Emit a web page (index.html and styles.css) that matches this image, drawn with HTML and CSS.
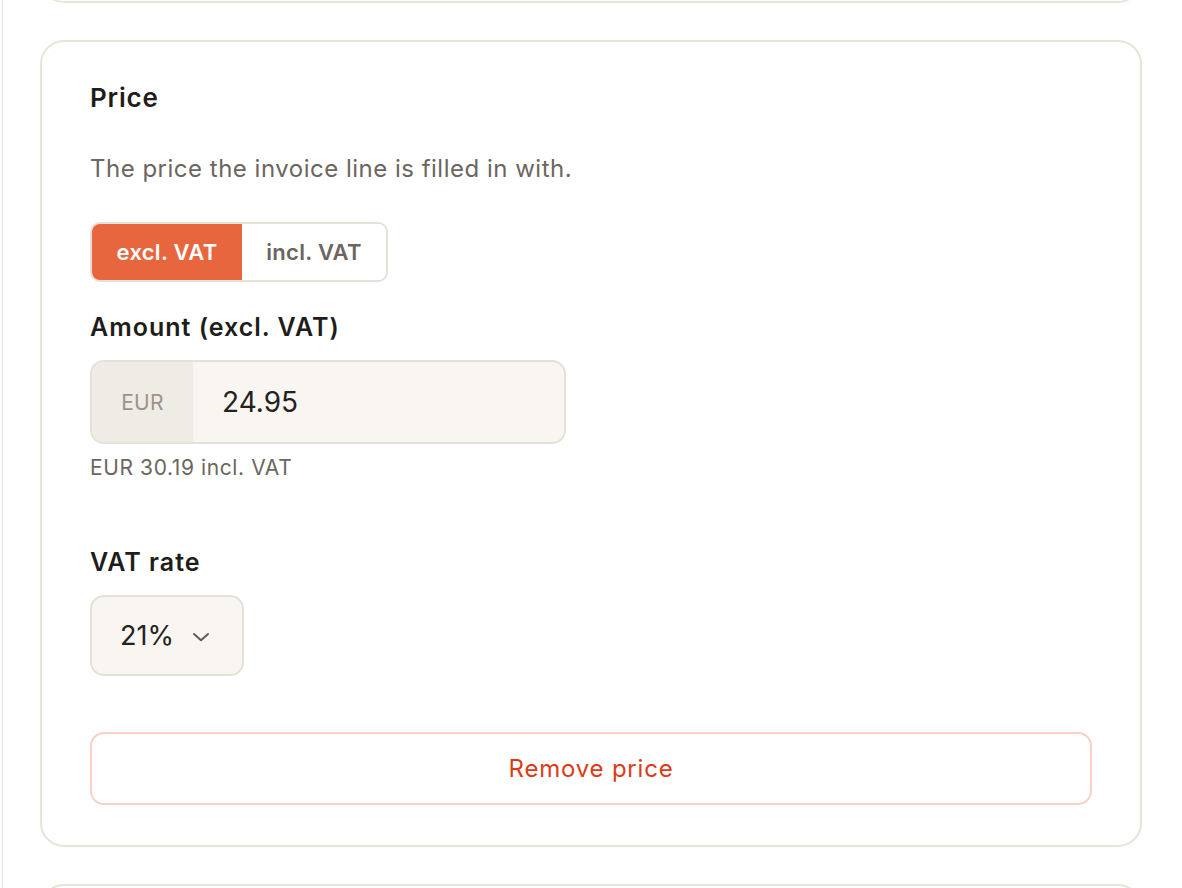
FILE: index.html
```html
<!DOCTYPE html>
<html>
<head>
<meta charset="utf-8">
<link rel="stylesheet" href="styles.css">
</head>
<body>
<div class="page">
  <div class="card card-prev"></div>
  <div class="card">
    <h2 class="title">Price</h2>
    <p class="desc">The price the invoice line is filled in with.</p>
    <div class="toggle">
      <button class="seg seg-active">excl. VAT</button>
      <button class="seg">incl. VAT</button>
    </div>
    <label class="label label-amount">Amount (excl. VAT)</label>
    <div class="money">
      <span class="prefix">EUR</span>
      <span class="value">24.95</span>
    </div>
    <p class="hint">EUR 30.19 incl. VAT</p>
    <label class="label label-vat">VAT rate</label>
    <div class="select">
      <span class="select-value">21%</span>
      <svg class="chev" width="18" height="10" viewBox="0 0 18 10"><path d="M2 2 9 8.2 16 2" fill="none" stroke="#5f5a54" stroke-width="2" stroke-linecap="round" stroke-linejoin="round"/></svg>
    </div>
    <button class="remove">Remove price</button>
  </div>
  <div class="card card-next"></div>
</div>
</body>
</html>
```
FILE: styles.css
```css
html, body {
  margin: 0;
  padding: 0;
  background: #ffffff;
  height: 888px;
  overflow: hidden;
}
body {
  font-family: Inter, "Noto Sans", sans-serif;
  color: #1f1d1a;
  padding-left: 2px;
}
.page {
  border-left: 1px solid #e6e2d8;
  padding-left: 37px;
  width: 1102px;
  display: flex;
  flex-direction: column;
  gap: 37px;
  min-height: 1200px;
}
.card {
  border: 2px solid #e8e4da;
  border-radius: 24px;
  background: #fff;
  padding: 40px 48px;
  display: flex;
  flex-direction: column;
  align-items: flex-start;
  box-sizing: border-box;
}
.card-prev {
  height: 100px;
  margin-top: -97px;
  padding: 0;
}
.card-next {
  height: 200px;
  padding: 0;
}
.title {
  margin: 0;
  font-size: 26px;
  line-height: 32px;
  font-weight: 600;
  letter-spacing: 0.8px;
}
.desc {
  margin: 39px 0 0;
  font-size: 24px;
  line-height: 32px;
  color: #6b6660;
  letter-spacing: 0.5px;
}
.toggle {
  margin-top: 37px;
  display: flex;
  border: 2px solid #e6e1d8;
  border-radius: 10px;
  overflow: hidden;
  height: 60px;
  box-sizing: border-box;
}
.seg {
  border: none;
  background: #fff;
  font-family: inherit;
  font-size: 22px;
  font-weight: 600;
  letter-spacing: 0.3px;
  color: #6b6660;
  width: 144px;
  padding: 0;
  cursor: pointer;
}
.seg-active {
  background: #e8663d;
  color: #fff;
  width: 150px;
}
.label {
  display: block;
  font-size: 25px;
  line-height: 32px;
  font-weight: 600;
  letter-spacing: 1px;
}
.label-amount { margin-top: 29px; }
.label-vat { margin-top: 66px; }
.money {
  margin-top: 17px;
  width: 476px;
  height: 84px;
  box-sizing: border-box;
  border: 2px solid #e6e1d8;
  border-radius: 14px;
  background: #f9f6f1;
  display: flex;
  overflow: hidden;
}
.prefix {
  width: 101px;
  background: #efebe5;
  display: flex;
  align-items: center;
  justify-content: center;
  font-size: 21px;
  letter-spacing: 0.3px;
  color: #9a948c;
}
.value {
  display: flex;
  align-items: center;
  padding-left: 29px;
  font-size: 28px;
  color: #222;
}
.hint {
  margin: 12px 0 0;
  font-size: 21px;
  line-height: 24px;
  letter-spacing: 0.6px;
  color: #6b6660;
}
.select {
  margin-top: 17px;
  width: 154px;
  height: 81px;
  box-sizing: border-box;
  border: 2px solid #e6e1d8;
  border-radius: 14px;
  background: #f9f6f1;
  display: flex;
  align-items: center;
  padding-left: 28px;
  gap: 18px;
}
.select-value {
  font-size: 27px;
  color: #222;
}
.chev { display: block; margin-top: 2px; }
.remove {
  margin-top: 56px;
  align-self: stretch;
  height: 73px;
  border: 2px solid #fcd0c4;
  border-radius: 14px;
  background: #fff;
  color: #dd3b15;
  font-family: inherit;
  font-size: 24px;
  letter-spacing: 0.8px;
  cursor: pointer;
}
```
